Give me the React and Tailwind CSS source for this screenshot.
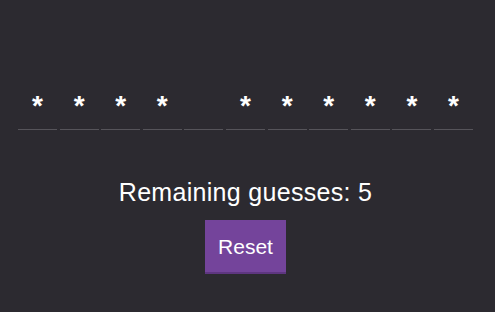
export default function App() {
  const letters = ["*", "*", "*", "*", "", "*", "*", "*", "*", "*", "*"];
  return (
    <div className="w-[495px] h-[312px] bg-[#2c2a30] text-white pr-[4px] flex flex-col items-center" style={{ fontFamily: '"Liberation Sans", Arial, sans-serif' }}>
      <div className="flex gap-[2.6px] mt-[90px]">
        {letters.map((l, i) => (
          <div key={i} className="w-[39px] h-[40px] border-b border-[#56545a] flex justify-center text-[28px] font-bold leading-[32px]">
            {l}
          </div>
        ))}
      </div>
      <div className="mt-[48px] text-[25px] leading-[28px] tracking-[0.3px]">Remaining guesses: 5</div>
      <button className="mt-[14px] bg-[#74449b] border-b-2 border-[#5e3680] px-[13px] pt-[15px] pb-[13px] text-[21px] leading-[24px]">Reset</button>
    </div>
  );
}
